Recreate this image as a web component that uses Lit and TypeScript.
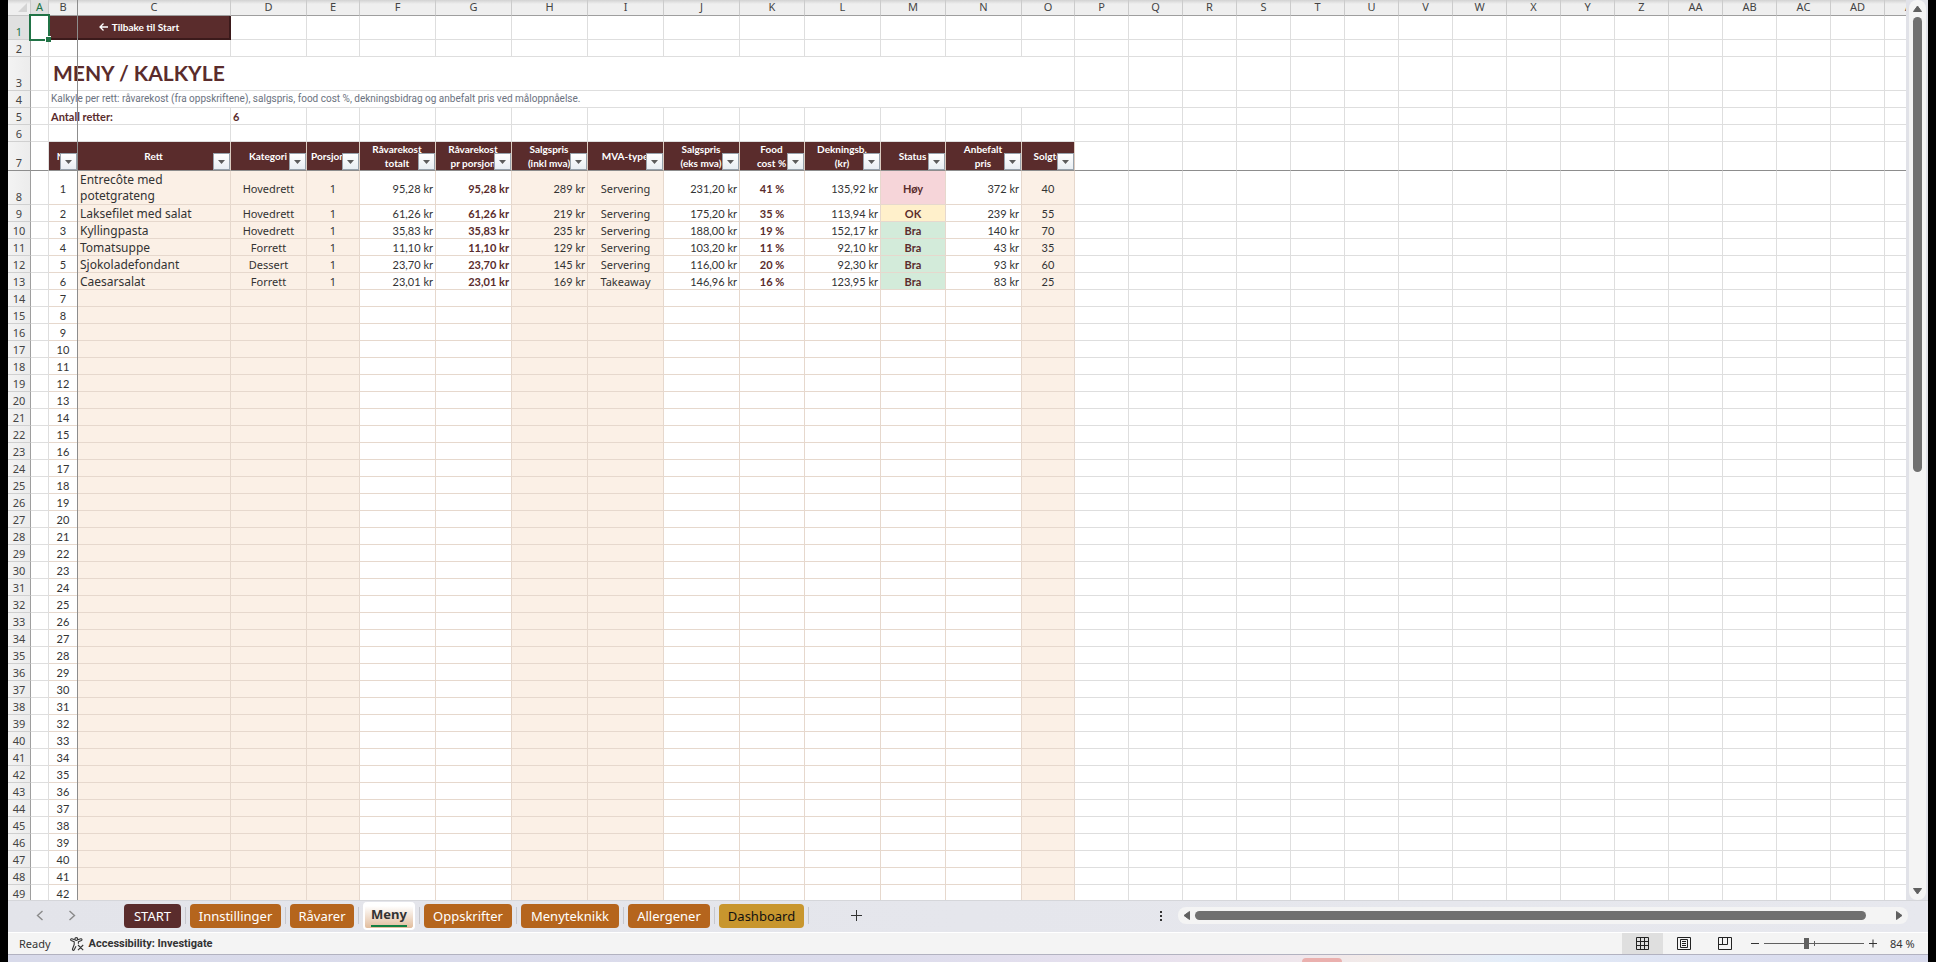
import { LitElement, html, css, nothing, svg } from "lit";
import { customElement, state } from "lit/decorators.js";
import { classMap } from "lit/directives/class-map.js";
import { styleMap } from "lit/directives/style-map.js";

const COLUMNS: [string, number][] = [
  ["A", 18], ["B", 29], ["C", 153], ["D", 76], ["E", 53], ["F", 76], ["G", 76],
  ["H", 76], ["I", 76], ["J", 76], ["K", 65], ["L", 76], ["M", 65], ["N", 76],
  ["O", 53], ["P", 54], ["Q", 54], ["R", 54], ["S", 54], ["T", 54], ["U", 54],
  ["V", 54], ["W", 54], ["X", 54], ["Y", 54], ["Z", 54], ["AA", 54], ["AB", 54],
  ["AC", 54], ["AD", 54], ["AE", 54],
];
const OUTER = COLUMNS.slice(15);

const HEADINGS = [
  "Nr", "Rett", "Kategori", "Porsjoner", "Råvarekost\ntotalt",
  "Råvarekost\npr porsjon", "Salgspris\n(inkl mva)", "MVA-type",
  "Salgspris\n(eks mva)", "Food\ncost %", "Dekningsb.\n(kr)", "Status",
  "Anbefalt\npris", "Solgte",
];

const DISHES = [
  ["Entrecôte med potetgrateng", "Hovedrett", "1", "95,28 kr", "95,28 kr", "289 kr", "Servering", "231,20 kr", "41 %", "135,92 kr", "Høy", "372 kr", "40"],
  ["Laksefilet med salat", "Hovedrett", "1", "61,26 kr", "61,26 kr", "219 kr", "Servering", "175,20 kr", "35 %", "113,94 kr", "OK", "239 kr", "55"],
  ["Kyllingpasta", "Hovedrett", "1", "35,83 kr", "35,83 kr", "235 kr", "Servering", "188,00 kr", "19 %", "152,17 kr", "Bra", "140 kr", "70"],
  ["Tomatsuppe", "Forrett", "1", "11,10 kr", "11,10 kr", "129 kr", "Servering", "103,20 kr", "11 %", "92,10 kr", "Bra", "43 kr", "35"],
  ["Sjokoladefondant", "Dessert", "1", "23,70 kr", "23,70 kr", "145 kr", "Servering", "116,00 kr", "20 %", "92,30 kr", "Bra", "93 kr", "60"],
  ["Caesarsalat", "Forrett", "1", "23,01 kr", "23,01 kr", "169 kr", "Takeaway", "146,96 kr", "16 %", "123,95 kr", "Bra", "83 kr", "25"],
];
const FIELD_STYLE = [
  "fill dish", "fill word", "fill word", "num", "num strong", "num fill",
  "fill word", "num", "strong", "num", "strong", "num", "fill",
];
const STATUS_STYLE: Record<string, string> = { "Høy": "high", OK: "ok", Bra: "good" };
const DISH_ROWS = 42;

const TABS: { name: string; tone: string; width: number }[] = [
  { name: "START", tone: "wine", width: 57 },
  { name: "Innstillinger", tone: "orange", width: 91 },
  { name: "Råvarer", tone: "orange", width: 64 },
  { name: "Meny", tone: "active", width: 52 },
  { name: "Oppskrifter", tone: "orange", width: 88 },
  { name: "Menyteknikk", tone: "orange", width: 98 },
  { name: "Allergener", tone: "orange", width: 82 },
  { name: "Dashboard", tone: "gold", width: 85 },
];

@customElement("sheet-grid")
class SheetGrid extends LitElement {
  static styles = css`
    :host {
      display: block;
      position: relative;
      overflow: hidden;
      background: #fff;
      color: #333;
      font: 11px/16px Lato, "Noto Sans", sans-serif;
    }
    table {
      table-layout: fixed;
      width: 0;
      border-spacing: 0;
    }
    td, th {
      box-sizing: border-box;
      height: 17px;
      padding: 0;
      border-right: 1px solid #dedede;
      border-bottom: 1px solid #dedede;
      text-align: center;
      vertical-align: middle;
      font-weight: 400;
      white-space: nowrap;
    }
    .letters th {
      height: 16px;
      padding-bottom: 1px;
      border-bottom-color: #9e9e9e;
      border-right-color: #cbcbcb;
      background: linear-gradient(#d2d2d2, #efefef 4px);
      font-family: "Noto Sans", sans-serif;
      vertical-align: top;
      line-height: 13px;
      color: #444;
    }
    .letters th.corner {
      padding: 3px 3px 0 0;
      border-bottom-color: #c6c6c6;
    }
    .corner svg { display: block; margin-left: auto; }
    tbody th {
      border-right-color: #9e9e9e;
      border-bottom-color: #d0d0d0;
      background: linear-gradient(90deg, #f3f3f3, #ececec);
      font-family: "Noto Sans", sans-serif;
      line-height: 14px;
      vertical-align: bottom;
      color: #444;
    }
    .letters th.here, tbody th.here {
      background: #e0e0e0;
      color: #217346;
    }
    .r1 > * { height: 24px; }
    .r3 > *, .r8 > * { height: 34px; }
    .r7 > * { height: 29px; border-bottom-color: #8d8d8d; }
    .back {
      border-right: 2px solid #3b1a1b;
      border-bottom: 2px solid #3b1a1b;
      background: #5a2c2c;
    }
    .back a {
      display: flex;
      justify-content: center;
      align-items: center;
      gap: 4px;
      color: #fff;
      font-size: 10px;
      font-weight: 700;
      text-decoration: none;
    }
    .title, .note, .label { text-align: left; }
    .title {
      padding: 0 0 2px 4px;
      font-size: 21px;
      line-height: 30px;
      font-weight: 700;
      color: #5a2c2c;
    }
    .note {
      padding-left: 2px;
      font-family: Roboto, sans-serif;
      font-size: 10px;
      color: #6b7280;
    }
    .label {
      padding: 1px 0 0 2px;
      line-height: 15px;
      font-weight: 700;
      color: #5a2c2c;
    }
    .head {
      position: relative;
      padding-right: 1px;
      border-right-color: #dccbc0;
      background: #5a2c2c;
      color: #fff;
      font-size: 10px;
      line-height: 14px;
      font-weight: 700;
      white-space: pre;
    }
    .filter {
      position: absolute;
      right: 0;
      bottom: 0;
      display: grid;
      place-items: center;
      width: 17px;
      height: 17px;
      padding: 0;
      border: 1px solid #98a3ad;
      border-radius: 0;
      background: linear-gradient(#fff, #e9eef3);
    }
    .cell { padding-top: 1px; border-color: #e6d8cd; line-height: 15px; }
    .fill { background: #fbf0e6; }
    .num { padding-right: 2px; text-align: right; }
    .strong { font-weight: 700; color: #5a2c2c; }
    .word, .dish { font-family: "Noto Sans", sans-serif; }
    .dish {
      padding-left: 2px;
      text-align: left;
      font-size: 12px;
      white-space: normal;
    }
    .high { background: #f6d5d9; }
    .ok { background: #fff0cb; }
    .good { background: #d3ebda; }
    .r8 .dish { padding-right: 30px; line-height: 16px; }
    .freeze {
      position: absolute;
      top: 0;
      bottom: 0;
      left: 69px;
      width: 1px;
      background: #8d8d8d;
    }
    .cursor {
      position: absolute;
      top: 14px;
      left: 21px;
      width: 17px;
      height: 23px;
      border: 2px solid #217346;
    }
    .cursor::after {
      content: "";
      position: absolute;
      right: -3px;
      bottom: -3px;
      width: 5px;
      height: 5px;
      border: solid #fff;
      border-width: 1px 0 0 1px;
      background: #217346;
    }
  `;

  private outer = () => OUTER.map(() => html`<td></td>`);
  private blanks = (n: number) => Array.from({ length: n }, () => html`<td></td>`);

  private row(n: number, cells: unknown) {
    return html`<tr class="r${n}">
      <th scope="row" class=${n === 1 ? "here" : ""}>${n}</th>
      <td></td>${cells}${this.outer()}
    </tr>`;
  }

  private dishRow(i: number) {
    const dish = DISHES[i];
    return this.row(i + 8, html`<td class="cell">${i + 1}</td>${FIELD_STYLE.map((style, f) => {
      const tone = dish && f === 10 ? STATUS_STYLE[dish[f]] : "";
      return html`<td class="cell ${style} ${tone}">${dish ? dish[f] : nothing}</td>`;
    })}`);
  }

  render() {
    return html`
      <table>
        <colgroup>
          <col style=${styleMap({ width: "23px" })}>
          ${COLUMNS.map(([, w]) => html`<col style=${styleMap({ width: `${w}px` })}>`)}
        </colgroup>
        <thead>
          <tr class="letters">
            <th class="corner"><svg width="9" height="9"><path d="M9 0V9H0Z" fill="#d4d4d4"/></svg></th>
            ${COLUMNS.map(([name]) => html`<th scope="col" class=${name === "A" ? "here" : ""}>${name}</th>`)}
          </tr>
        </thead>
        <tbody>
          ${this.row(1, html`<td class="back" colspan="2"><a href="#start">
            <svg width="9" height="8" viewBox="0 0 9 8" fill="none" stroke="#fff" stroke-width="1.3"><path d="M9 4H1M4.5 .5 1 4l3.5 3.5"/></svg>Tilbake til Start</a></td>${this.blanks(12)}`)}
          ${this.row(2, this.blanks(14))}
          ${this.row(3, html`<td class="title" colspan="14">MENY / KALKYLE</td>`)}
          ${this.row(4, html`<td class="note" colspan="14">Kalkyle per rett: råvarekost (fra oppskriftene), salgspris, food cost %, dekningsbidrag og anbefalt pris ved måloppnåelse.</td>`)}
          ${this.row(5, html`<td class="label" colspan="2">Antall retter:</td><td class="label">6</td>${this.blanks(11)}`)}
          ${this.row(6, this.blanks(14))}
          ${this.row(7, HEADINGS.map((text) => html`<td class="head">${text}<button class="filter" aria-label="Filter"><svg width="7" height="4"><path d="M0 0H7L3.5 4Z" fill="#5c5c5c"/></svg></button></td>`))}
          ${Array.from({ length: DISH_ROWS }, (_, i) => this.dishRow(i))}
        </tbody>
      </table>
      <div class="freeze"></div>
      <div class="cursor"></div>
    `;
  }
}

@customElement("app-root")
class AppRoot extends LitElement {
  @state() private zoom = 84;
  @state() private view = 0;

  static styles = css`
    :host {
      display: flex;
      flex-direction: column;
      box-sizing: border-box;
      height: 100vh;
      padding: 0 8px;
      background: #000;
      color: #333;
      font: 11px/16px "Noto Sans", sans-serif;
    }
    button { padding: 0; border: 0; background: none; color: inherit; font: inherit; }
    svg { display: block; }
    .work { flex: 1; display: flex; min-height: 0; }
    sheet-grid { flex: 1; min-width: 0; }
    .rail { display: flex; padding: 0 2px 0 3px; background: #e1e2e8; }
    .vtrack {
      display: flex;
      flex-direction: column;
      align-items: center;
      box-sizing: border-box;
      width: 17px;
      padding: 5px 0;
      border-radius: 8px;
      background: #f4f4f4;
    }
    .vroom { flex: 1; margin: 5px 0; }
    .vthumb { width: 9px; height: 52.5%; border-radius: 5px; background: #707070; }
    .tabs {
      display: flex;
      align-items: center;
      height: 29px;
      padding-bottom: 2px;
      border-top: 1px solid #d5d6da;
      background: linear-gradient(90deg, #e3e4ea, #e7e8ee);
    }
    .step { width: 10px; margin-left: 28px; color: #8a8a8a; }
    .step + .step { margin-left: 22px; }
    .list { display: flex; align-items: center; margin-left: 46px; }
    .slot { display: flex; align-items: center; }
    .slot::after {
      content: "";
      width: 1px;
      height: 17px;
      margin: 0 4px;
      background: #c6c7cd;
    }
    .tab {
      height: 24px;
      border-radius: 4px;
      color: #fff;
      font-size: 13px;
      line-height: 24px;
    }
    .wine { background: #5a2c2c; }
    .orange { background: #b5651d; }
    .gold { background: #c8962e; color: #111; }
    .active {
      box-sizing: border-box;
      height: 28px;
      border: solid #fff;
      border-width: 0 2px 2px;
      background: linear-gradient(#fff 15%, #e2bd9d);
      color: #333;
      font-weight: 700;
    }
    .active span { display: inline-block; height: 20px; line-height: 18px; border-bottom: 2px solid #138043; }
    .add { margin-left: 38px; }
    .dots { margin-left: auto; margin-right: 16px; }
    .htrack {
      flex: 0 0 38%;
      display: flex;
      align-items: center;
      box-sizing: border-box;
      height: 17px;
      margin-right: 20px;
      padding: 0 5px;
      border-radius: 8px;
      background: #f4f4f4;
    }
    .hthumb { flex: 1; height: 9px; margin: 0 30px 0 5px; border-radius: 5px; background: #707070; }
    .status {
      display: flex;
      align-items: center;
      height: 21px;
      border-top: 1px solid #fff;
      border-bottom: 1px solid #b2b2c0;
      background: #f4f4f4;
    }
    .ready { margin-left: 11px; }
    .access {
      display: flex;
      align-items: center;
      gap: 5px;
      margin-left: 19px;
      font-family: Roboto, sans-serif;
      font-weight: 700;
    }
    .views { display: flex; gap: 16px; margin-left: auto; }
    .view { display: grid; place-items: center; width: 25px; height: 21px; }
    .view.on { box-shadow: -8px 0 #dfdfdf, 8px 0 #dfdfdf; background: #dfdfdf; }
    .zoom { display: flex; align-items: center; gap: 5px; margin: 0 14px; }
    .zoom output { margin-left: 8px; width: 24px; white-space: nowrap; }
    .range {
      appearance: none;
      width: 100px;
      height: 11px;
      margin: 0;
      background:
        linear-gradient(#606060, #606060) 50px 50% / 1px 5px no-repeat,
        linear-gradient(#606060, #606060) 0 50% / 100% 1px no-repeat;
    }
    .range::-webkit-slider-thumb {
      appearance: none;
      width: 5px;
      height: 11px;
      background: #606060;
    }
    .desk {
      display: flex;
      height: 7px;
      overflow: hidden;
      background: linear-gradient(90deg, #d8daea, #dcdcec 45%, #e6e0ee 58%, #efe6ec 67%, #f2eae8 71%, #e3edf9 78%, #dcdff0 90%, #d8daec);
    }
    .app {
      width: 40px;
      height: 8px;
      margin: 3px 0 0 67.4%;
      border-radius: 4px 4px 0 0;
      background: #eab0ae;
    }
  `;

  private triangle(d: string, w: number, h: number) {
    return html`<svg width=${w} height=${h} viewBox="0 0 ${w} ${h}"><path d=${d} fill="#606060" stroke="#606060" stroke-linejoin="round"/></svg>`;
  }

  private viewIcon(i: number) {
    const shapes = [
      svg`<path d="M.5 .5H12.5V12.5H.5ZM4.5 .5V12.5M8.5 .5V12.5M.5 4.5H12.5M.5 8.5H12.5"/>`,
      svg`<path d="M.5 .5H13.5V12.5H.5ZM3.5 2.5H10.5V10.5H3.5ZM5 4.5H9M5 6.5H9M5 8.5H9"/>`,
      svg`<path d="M.5 .5H13.5V12.5H.5ZM4.5 .5V7.5M9.5 .5V7.5M.5 7.5H9.5"/>`,
    ];
    return html`<svg width="14" height="13" fill="none" stroke="#222" stroke-width="1">${shapes[i]}</svg>`;
  }

  render() {
    return html`
      <main class="work">
        <sheet-grid></sheet-grid>
        <div class="rail"><div class="vtrack">
          ${this.triangle("M4.5 1 8.5 6.5H.5Z", 9, 7)}
          <div class="vroom"><div class="vthumb"></div></div>
          ${this.triangle("M4.5 6 8.5 .5H.5Z", 9, 7)}
        </div></div>
      </main>
      <nav class="tabs">
        <button class="step" aria-label="Previous sheet"><svg width="8" height="11" fill="none" stroke="currentColor" stroke-width="1.4"><path d="M6.5 1 1.5 5.5l5 4.5"/></svg></button>
        <button class="step" aria-label="Next sheet"><svg width="8" height="11" fill="none" stroke="currentColor" stroke-width="1.4"><path d="M1.5 1l5 4.5-5 4.5"/></svg></button>
        <div class="list">
          ${TABS.map((t) => html`<div class="slot"><button class="tab ${t.tone}" style=${styleMap({ width: `${t.width}px` })}><span>${t.name}</span></button></div>`)}
        </div>
        <button class="add" aria-label="New sheet"><svg width="11" height="11" stroke="#333"><path d="M5.5 0V11M0 5.5H11"/></svg></button>
        <svg class="dots" width="2" height="10" fill="#333"><path d="M0 0h2v2H0zM0 4h2v2H0zM0 8h2v2H0z"/></svg>
        <div class="htrack">
          ${this.triangle("M1 4.5 6.5 .5V8.5Z", 7, 9)}
          <div class="hthumb"></div>
          ${this.triangle("M6 4.5 .5 .5V8.5Z", 7, 9)}
        </div>
      </nav>
      <footer class="status">
        <span class="ready">Ready</span>
        <span class="access">
          <svg width="14" height="14" viewBox="0 0 14 14" fill="none" stroke="#333" stroke-width="1.1" stroke-linejoin="round">
            <circle cx="6.3" cy="2" r="1.4"/>
            <path d="M4.8 2.8 1.8 1.8C.6 1.6.2 3 1.2 3.5L4.2 4.8V7.5L2.5 12c-.3 1.3 1.2 1.8 1.7.8L6 9.3M7.8 2.8l3-1c1.2-.2 1.6 1.2.6 1.7L8.4 4.8v2M8 8l5.2 5.2M13.2 8 8 13.2"/>
          </svg>Accessibility: Investigate</span>
        <div class="views">
          ${["Normal", "Page Layout", "Page Break Preview"].map((label, i) => html`<button
            class=${classMap({ view: true, on: this.view === i })}
            aria-label=${label} @click=${() => (this.view = i)}>${this.viewIcon(i)}</button>`)}
        </div>
        <div class="zoom">
          <button aria-label="Zoom out" @click=${() => this.zoom--}><svg width="8" height="9" stroke="#333"><path d="M0 4.5H8"/></svg></button>
          <input class="range" type="range" min="10" max="186" aria-label="Zoom" .value=${String(this.zoom)}
            @input=${(e: Event) => (this.zoom = Number((e.target as HTMLInputElement).value))}>
          <button aria-label="Zoom in" @click=${() => this.zoom++}><svg width="8" height="9" stroke="#333"><path d="M0 4.5H8M4 .5V8.5"/></svg></button>
          <output>${this.zoom} %</output>
        </div>
      </footer>
      <div class="desk"><div class="app"></div></div>
    `;
  }
}
